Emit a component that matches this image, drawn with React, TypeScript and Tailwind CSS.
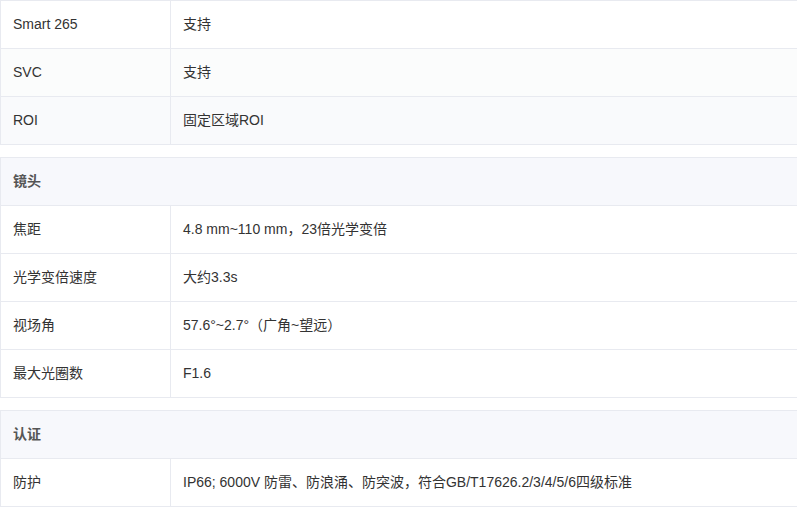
const font = "font-['Liberation_Sans','Noto_Sans_CJK_SC',sans-serif]";

type Row = { label: string; value: string; bg?: string };

const sections: { title?: string; rows: Row[] }[] = [
  {
    rows: [
      { label: "Smart 265", value: "支持", bg: "bg-white" },
      { label: "SVC", value: "支持", bg: "bg-[#fbfcfc]" },
      { label: "ROI", value: "固定区域ROI", bg: "bg-[#f9fafc]" },
    ],
  },
  {
    title: "镜头",
    rows: [
      { label: "焦距", value: "4.8 mm~110 mm，23倍光学变倍" },
      { label: "光学变倍速度", value: "大约3.3s" },
      { label: "视场角", value: "57.6°~2.7°（广角~望远）" },
      { label: "最大光圈数", value: "F1.6" },
    ],
  },
  {
    title: "认证",
    rows: [
      {
        label: "防护",
        value: "IP66; 6000V 防雷、防浪涌、防突波，符合GB/T17626.2/3/4/5/6四级标准",
      },
    ],
  },
];

export default function App() {
  return (
    <div className={`w-[797px] bg-white text-[14px] text-[#333] ${font}`}>
      {sections.map((s, i) => (
        <div key={i} className={`border-t border-l border-[#e8eaf0] ${i > 0 ? "mt-3" : ""}`}>
          {s.title && (
            <div className="flex h-[48px] items-center border-b border-[#e8eaf0] bg-[#f7f8fc] pl-3 font-semibold text-[#555]">
              {s.title}
            </div>
          )}
          {s.rows.map((r) => (
            <div key={r.label} className={`flex h-[48px] border-b border-[#e8eaf0] ${r.bg ?? "bg-white"}`}>
              <div className="flex w-[170px] shrink-0 items-center border-r border-[#e8eaf0] pl-3">{r.label}</div>
              <div className="flex flex-1 items-center pl-3">{r.value}</div>
            </div>
          ))}
        </div>
      ))}
    </div>
  );
}
